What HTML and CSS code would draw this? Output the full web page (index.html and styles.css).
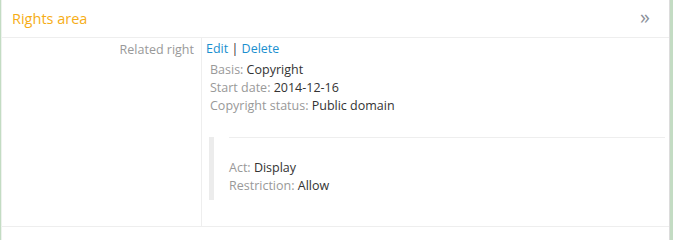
FILE: index.html
```html
<!DOCTYPE html>
<html>
<head>
<meta charset="utf-8">
<link rel="stylesheet" href="styles.css">
</head>
<body>
<div class="frame">
  <div class="panel">
    <div class="header">
      <span class="title">Rights area</span>
      <span class="toggle">»</span>
    </div>
    <div class="row">
      <div class="label">Related right</div>
      <div class="value">
        <div class="actions"><a href="#">Edit</a> | <a href="#">Delete</a></div>
        <div class="fields">
          <div class="field"><span class="k">Basis:</span> Copyright</div>
          <div class="field"><span class="k">Start date:</span> 2014-12-16</div>
          <div class="field"><span class="k">Copyright status:</span> Public domain</div>
        </div>
        <div class="granted">
          <div class="granted-inner">
            <div class="field"><span class="k">Act:</span> Display</div>
            <div class="field"><span class="k">Restriction:</span> Allow</div>
          </div>
        </div>
      </div>
    </div>
  </div>
</div>
</body>
</html>
```
FILE: styles.css
```css
html, body {
  margin: 0;
  padding: 0;
  background: #fff;
}
body {
  font-family: "Open Sans", "Noto Sans", sans-serif;
  font-size: 12.5px;
  color: #333;
}
.frame {
  border-left: 1px solid #c3dcc3;
  border-right: 3px solid #c3dcc3;
  height: 240px;
  box-sizing: border-box;
}
.panel {
  border-left: 1px solid #eef2ee;
  border-right: 1px solid #dcdcdc;
  height: 100%;
  box-sizing: border-box;
}
.header {
  height: 37px;
  border-bottom: 1px solid #eeeeee;
  display: flex;
  align-items: center;
  justify-content: space-between;
  padding: 0 19px 0 10px;
}
.title {
  color: #f6ad16;
  font-size: 14.5px;
  padding-bottom: 1px;
}
.toggle {
  color: #8b919a;
  font-size: 20px;
  line-height: 20px;
  padding-bottom: 3px;
}
.row {
  display: grid;
  grid-template-columns: 200px 1fr;
  border-bottom: 1px solid #eeeeee;
}
.label {
  color: #999;
  text-align: right;
  padding: 3px 7px 0 0;
  line-height: 18px;
  border-right: 1px solid #eeeeee;
}
.value {
  padding: 2px 4px 26px 4px;
}
.actions {
  line-height: 18px;
  color: #333;
}
.actions a {
  color: #1a8fcf;
  text-decoration: none;
}
.fields {
  padding: 3px 0 0 4px;
}
.field {
  line-height: 18px;
}
.k {
  color: #999;
}
.granted {
  margin: 22px 0 0 3px;
  border-left: 5px solid #ececec;
  padding-left: 15px;
}
.granted-inner {
  border-top: 1px solid #eeeeee;
  padding: 21px 0 5px 0;
}
```
